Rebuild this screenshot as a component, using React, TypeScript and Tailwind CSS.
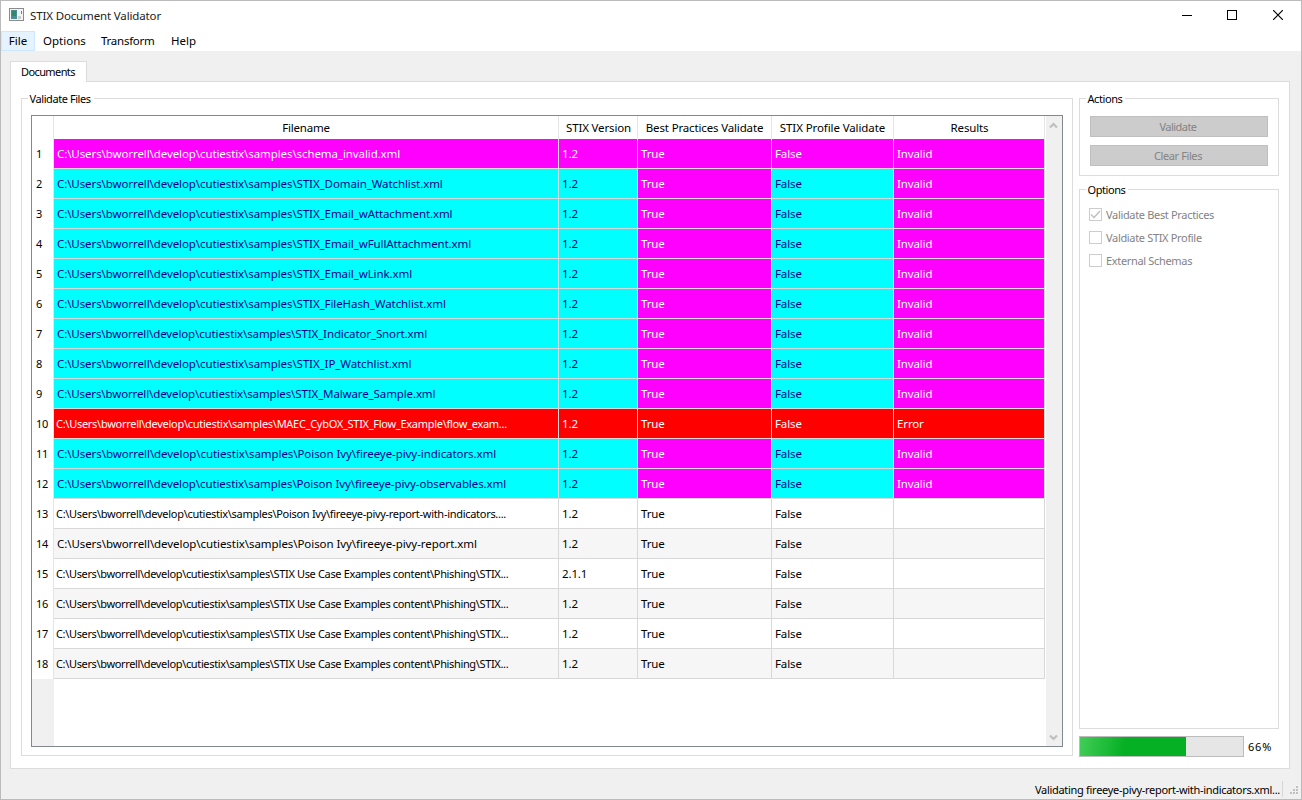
import { ReactNode } from "react";

type Tone = "m" | "c" | "r" | "n";
const tones: Record<Tone, string> = {
  m: "bg-[#ff00ff] text-white",
  c: "bg-[#00ffff] text-[#00008b]",
  r: "bg-[#ff0000] text-white",
  n: "text-black",
};
const base = "C:\\Users\\bworrell\\develop\\cutiestix\\samples\\";
const useCase = "STIX Use Case Examples content\\Phishing\\STIX...";

type Row = { file: string; version?: string; tones: Tone[]; result?: string; fit: string };
const M: Tone[] = ["m", "m", "m", "m", "m"];
const C: Tone[] = ["c", "c", "m", "c", "m"];
const R: Tone[] = ["r", "r", "r", "r", "r"];
const N: Tone[] = ["n", "n", "n", "n", "n"];

const full = "tracking-[-0.09px]";
const long = "tracking-[-0.07px]";
const cut = "-ml-px text-[11px] tracking-[-0.28px]";
const cutTight = "-ml-px text-[11px] tracking-[-0.35px]";

const rows: Row[] = [
  { file: "schema_invalid.xml", tones: M, result: "Invalid", fit: full },
  { file: "STIX_Domain_Watchlist.xml", tones: C, result: "Invalid", fit: full },
  { file: "STIX_Email_wAttachment.xml", tones: C, result: "Invalid", fit: full },
  { file: "STIX_Email_wFullAttachment.xml", tones: C, result: "Invalid", fit: full },
  { file: "STIX_Email_wLink.xml", tones: C, result: "Invalid", fit: full },
  { file: "STIX_FileHash_Watchlist.xml", tones: C, result: "Invalid", fit: full },
  { file: "STIX_Indicator_Snort.xml", tones: C, result: "Invalid", fit: "tracking-[-0.12px]" },
  { file: "STIX_IP_Watchlist.xml", tones: C, result: "Invalid", fit: full },
  { file: "STIX_Malware_Sample.xml", tones: C, result: "Invalid", fit: "tracking-[-0.12px]" },
  { file: "MAEC_CybOX_STIX_Flow_Example\\flow_exam...", tones: R, result: "Error", fit: cut },
  { file: "Poison Ivy\\fireeye-pivy-indicators.xml", tones: C, result: "Invalid", fit: long },
  { file: "Poison Ivy\\fireeye-pivy-observables.xml", tones: C, result: "Invalid", fit: "tracking-[-0.09px]" },
  { file: "Poison Ivy\\fireeye-pivy-report-with-indicators....", tones: N, fit: "-ml-px text-[11px] tracking-[-0.29px]" },
  { file: "Poison Ivy\\fireeye-pivy-report.xml", tones: N, fit: long },
  { file: useCase, version: "2.1.1", tones: N, fit: cutTight },
  { file: useCase, tones: N, fit: cutTight },
  { file: useCase, tones: N, fit: cutTight },
  { file: useCase, tones: N, fit: cutTight },
];

const headers = [
  { label: "Filename", fit: "tracking-[-0.2px]" },
  { label: "STIX Version", fit: "pl-px tracking-[-0.15px]" },
  { label: "Best Practices Validate", fit: "tracking-[-0.15px]" },
  { label: "STIX Profile Validate", fit: "tracking-[-0.1px]" },
  { label: "Results", fit: "pl-px tracking-[-0.15px]" },
];

const grid = "grid grid-cols-[505px_79px_134px_122px_151px]";

function Group({ title, className, children }: { title: string; className: string; children?: ReactNode }) {
  return (
    <section className={`relative border border-[#dcdcdc] ${className}`}>
      <h2 className="absolute -top-[8px] left-[6px] bg-white pl-[1.5px] pr-[3px] text-[11px] leading-[16px] tracking-[-0.42px]">{title}</h2>
      {children}
    </section>
  );
}

function Check({ label, checked }: { label: string; checked?: boolean }) {
  return (
    <div className="flex h-[13px] items-center gap-[4px]">
      <span className="flex size-[13px] shrink-0 items-center justify-center border border-[#cccccc] bg-white">
        {checked && (
          <svg width="11" height="11" viewBox="0 0 11 11" fill="none" stroke="#bfbfbf" strokeWidth="1.4">
            <path d="M1 5.4 4 8.4 10 2" />
          </svg>
        )}
      </span>
      <span className="text-[11px] tracking-[-0.33px] text-[#838383]">{label}</span>
    </div>
  );
}

function Chevron({ up }: { up?: boolean }) {
  return (
    <svg width="15" height="17" viewBox="0 0 15 17" fill="none" stroke="#bfbfbf" strokeWidth="2.2">
      <path d={up ? "M4 11.5 7.5 8 11 11.5" : "M4 6.5 7.5 10 11 6.5"} />
    </svg>
  );
}

export default function App() {
  return (
    <div className="flex h-[800px] w-[1302px] flex-col overflow-hidden whitespace-nowrap border border-[#bbbbbb] bg-[#f0f0f0] font-['Noto_Sans',sans-serif] text-[11.5px] leading-[16px] text-black">
      <header className="flex h-[30px] shrink-0 items-center bg-white pl-[8px]">
        <svg width="15" height="13" viewBox="0 0 15 13" className="mb-[3px]">
          <rect x=".5" y=".5" width="14" height="12" fill="#f4f4f4" stroke="#8c8c8c" />
          <rect x="2" y="2" width="6" height="9" fill="#4a8f96" />
          <rect x="3" y="3" width="4" height="5" fill="#2f8a68" />
          <rect x="9" y="8" width="3" height="3" fill="#cccccc" />
          <rect x="12" y="3" width="1" height="3" fill="#6f7f8f" />
        </svg>
        <h1 className="ml-[6px] tracking-[-0.14px] text-[#222222]">STIX Document Validator</h1>
        <div className="mb-[2px] ml-auto mr-[18px] flex items-center">
          <svg width="10" height="10" viewBox="0 0 10 10" className="mr-[35px]"><path d="M0 5.5H10" stroke="#000" /></svg>
          <svg width="10" height="10" viewBox="0 0 10 10" className="mr-[36px]"><rect x=".5" y=".5" width="9" height="9" fill="none" stroke="#000" /></svg>
          <svg width="10" height="10" viewBox="0 0 10 10"><path d="M0 0 10 10M10 0 0 10" stroke="#000" strokeWidth="1.2" /></svg>
        </div>
      </header>
      <nav className="flex h-[20px] shrink-0 items-center bg-white">
        <span className="flex h-[20px] w-[34px] items-center justify-center border border-[#cce8ff] bg-[#e5f3ff]">File</span>
        <span className="ml-[8px] w-[58px]">Options</span>
        <span className="w-[70px] tracking-[-0.25px]">Transform</span>
        <span>Help</span>
      </nav>
      <main className="flex flex-col pl-[9px] pt-[10px]">
        <div className="z-10 mb-[-1px] flex h-[21px] w-[77px] items-center border border-b-0 border-[#dcdcdc] bg-white pl-[10px] text-[11px] tracking-[-0.6px]">Documents</div>
        <div className="flex h-[688px] w-[1280px] gap-[6px] border border-[#dcdcdc] bg-white pl-[10px] pt-[16px]">
          <Group title="Validate Files" className="h-[658px] w-[1052px] pl-[9px] pt-[16px]">
            <div className="flex h-[632px] w-[1032px] border border-[#828790] bg-white">
              <div className="flex w-[22px] flex-col bg-[#f0f0f0]">
                <div className="h-[23px] border-r border-[#e5e5e5] bg-white" />
                {rows.map((_, i) => (
                  <div key={i} className="flex h-[30px] items-center border-r border-[#e5e5e5] bg-white pl-[4px] text-[11px] tracking-[-0.2px]">{i + 1}</div>
                ))}
              </div>
              <div className="w-[991px]">
                <div className={`${grid} h-[23px] text-center leading-[23px]`}>
                  {headers.map((h) => (
                    <div key={h.label} className={`h-[23px] border-r border-[#e5e5e5] ${h.fit}`}>{h.label}</div>
                  ))}
                </div>
                {rows.map((r, i) => (
                  <div key={i} className={`${grid} h-[30px] leading-[29px] ${i % 2 ? "bg-[#f6f6f6]" : "bg-white"}`}>
                    {[base + r.file, r.version ?? "1.2", "True", "False", r.result ?? ""].map((v, c) => (
                      <div key={c} className={`h-[30px] overflow-hidden border-b border-r border-[#d8d8d8] pl-[3px] ${tones[r.tones[c]]}`}>
                        <span className={c === 0 ? r.fit : "tracking-[-0.13px]"}>{v}</span>
                      </div>
                    ))}
                  </div>
                ))}
              </div>
              <div className="ml-[1px] flex w-[16px] flex-col justify-between bg-[#f0f0f0]">
                <Chevron up />
                <Chevron />
              </div>
            </div>
          </Group>
          <aside className="flex w-[200px] flex-col">
            <Group title="Actions" className="flex h-[78px] flex-col gap-[8px] pl-[10px] pt-[17px]">
              <button className="h-[21px] w-[178px] border border-[#bfbfbf] bg-[#cccccc] pr-[2px] text-[11px] tracking-[-0.55px] text-[#838383]">Validate</button>
              <button className="h-[21px] w-[178px] border border-[#bfbfbf] bg-[#cccccc] pr-[2px] text-[11px] tracking-[-0.4px] text-[#838383]">Clear Files</button>
            </Group>
            <Group title="Options" className="mt-[13px] flex h-[540px] flex-col gap-[10px] pl-[9px] pt-[18px]">
              <Check label="Validate Best Practices" checked />
              <Check label="Valdiate STIX Profile" />
              <Check label="External Schemas" />
            </Group>
            <div className="mt-[7px] flex h-[21px] items-center gap-[4px]">
              <div className="h-[21px] w-[165px] border border-[#bcbcbc] bg-[#e6e6e6]">
                <div className="h-[19px] w-[106px] bg-[linear-gradient(100deg,#42cd58_0%,#06b025_42%)]" />
              </div>
              <span className="text-[11px] tracking-[0.8px]">66%</span>
            </div>
          </aside>
        </div>
      </main>
      <footer className="flex flex-1 items-center justify-end">
        <span className="mt-[11px] text-[11px] tracking-[-0.3px]">Validating fireeye-pivy-report-with-indicators.xml...</span>
        <span className="ml-[2px] mt-[10px] h-[16px] w-px bg-[#d7d7d7]" />
        <svg width="18" height="14" viewBox="0 0 18 14" className="mt-[14px]" fill="#bfbfbf">
          <path d="M13 2h2v2h-2zM10 5h2v2h-2zM13 5h2v2h-2zM7 8h2v2H7zM10 8h2v2h-2zM13 8h2v2h-2z" />
        </svg>
      </footer>
    </div>
  );
}
